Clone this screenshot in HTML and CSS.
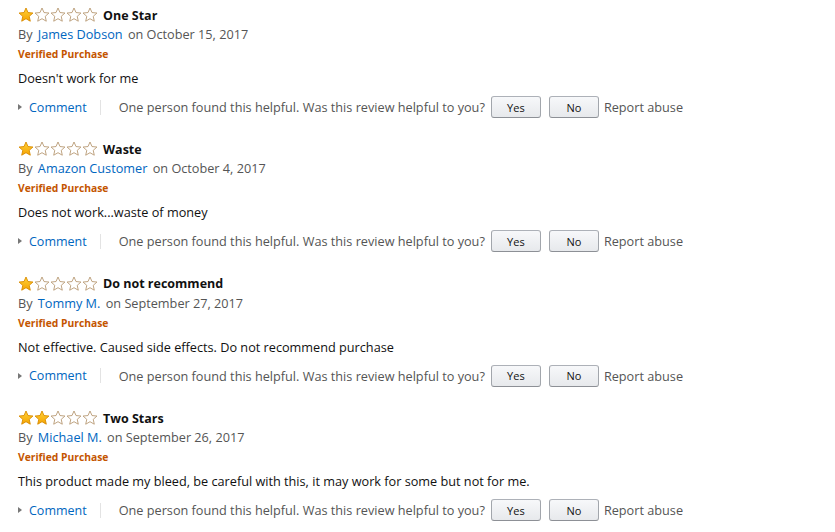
FILE: index.html
```html
<!DOCTYPE html>
<html>
<head>
<meta charset="utf-8">
<link rel="stylesheet" href="styles.css">
</head>
<body>
<svg width="0" height="0" class="defs" aria-hidden="true">
  <defs>
    <linearGradient id="gold" x1="0" y1="0" x2="0" y2="1">
      <stop offset="0" stop-color="#ffd23a"/>
      <stop offset="1" stop-color="#f5a300"/>
    </linearGradient>
    <symbol id="star-full" viewBox="0 0 16 16">
      <path d="M8 1 L10 5.55 L14.94 6.04 L11.23 9.35 L12.29 14.21 L8 11.7 L3.71 14.21 L4.77 9.35 L1.06 6.04 L6 5.55 Z" fill="url(#gold)" stroke="#d88b00" stroke-width="0.9" stroke-linejoin="round"/>
    </symbol>
    <symbol id="star-empty" viewBox="0 0 16 16">
      <path d="M8 1 L10 5.55 L14.94 6.04 L11.23 9.35 L12.29 14.21 L8 11.7 L3.71 14.21 L4.77 9.35 L1.06 6.04 L6 5.55 Z" fill="#fff" stroke="#b89a74" stroke-width="0.9" stroke-linejoin="round"/>
    </symbol>
  </defs>
</svg>

<div class="reviews">
  <div class="review">
    <div class="title-row">
      <span class="stars">
        <svg class="star"><use href="#star-full"/></svg><svg class="star"><use href="#star-empty"/></svg><svg class="star"><use href="#star-empty"/></svg><svg class="star"><use href="#star-empty"/></svg><svg class="star"><use href="#star-empty"/></svg>
      </span>
      <span class="title">One Star</span>
    </div>
    <div class="by-row">By <a class="link author">James Dobson</a> on October 15, 2017</div>
    <div class="verified">Verified Purchase</div>
    <div class="body">Doesn't work for me</div>
    <div class="actions">
      <span class="comment"><span class="tri"></span><a class="link">Comment</a></span>
      <span class="sep"></span>
      <span class="helpful">One person found this helpful. Was this review helpful to you?</span>
      <button class="btn">Yes</button>
      <button class="btn">No</button>
      <span class="report">Report abuse</span>
    </div>
  </div>

  <div class="review">
    <div class="title-row">
      <span class="stars">
        <svg class="star"><use href="#star-full"/></svg><svg class="star"><use href="#star-empty"/></svg><svg class="star"><use href="#star-empty"/></svg><svg class="star"><use href="#star-empty"/></svg><svg class="star"><use href="#star-empty"/></svg>
      </span>
      <span class="title">Waste</span>
    </div>
    <div class="by-row">By <a class="link author">Amazon Customer</a> on October 4, 2017</div>
    <div class="verified">Verified Purchase</div>
    <div class="body">Does not work...waste of money</div>
    <div class="actions">
      <span class="comment"><span class="tri"></span><a class="link">Comment</a></span>
      <span class="sep"></span>
      <span class="helpful">One person found this helpful. Was this review helpful to you?</span>
      <button class="btn">Yes</button>
      <button class="btn">No</button>
      <span class="report">Report abuse</span>
    </div>
  </div>

  <div class="review">
    <div class="title-row">
      <span class="stars">
        <svg class="star"><use href="#star-full"/></svg><svg class="star"><use href="#star-empty"/></svg><svg class="star"><use href="#star-empty"/></svg><svg class="star"><use href="#star-empty"/></svg><svg class="star"><use href="#star-empty"/></svg>
      </span>
      <span class="title">Do not recommend</span>
    </div>
    <div class="by-row">By <a class="link author">Tommy M.</a> on September 27, 2017</div>
    <div class="verified">Verified Purchase</div>
    <div class="body">Not effective. Caused side effects. Do not recommend purchase</div>
    <div class="actions">
      <span class="comment"><span class="tri"></span><a class="link">Comment</a></span>
      <span class="sep"></span>
      <span class="helpful">One person found this helpful. Was this review helpful to you?</span>
      <button class="btn">Yes</button>
      <button class="btn">No</button>
      <span class="report">Report abuse</span>
    </div>
  </div>

  <div class="review">
    <div class="title-row">
      <span class="stars">
        <svg class="star"><use href="#star-full"/></svg><svg class="star"><use href="#star-full"/></svg><svg class="star"><use href="#star-empty"/></svg><svg class="star"><use href="#star-empty"/></svg><svg class="star"><use href="#star-empty"/></svg>
      </span>
      <span class="title">Two Stars</span>
    </div>
    <div class="by-row">By <a class="link author">Michael M.</a> on September 26, 2017</div>
    <div class="verified">Verified Purchase</div>
    <div class="body">This product made my bleed, be careful with this, it may work for some but not for me.</div>
    <div class="actions">
      <span class="comment"><span class="tri"></span><a class="link">Comment</a></span>
      <span class="sep"></span>
      <span class="helpful">One person found this helpful. Was this review helpful to you?</span>
      <button class="btn">Yes</button>
      <button class="btn">No</button>
      <span class="report">Report abuse</span>
    </div>
  </div>
</div>
</body>
</html>
```

FILE: styles.css
```css
html, body {
  margin: 0;
  padding: 0;
  background: #fff;
}
body {
  font-family: "Open Sans", "Liberation Sans", sans-serif;
  font-size: 12.7px;
  color: #111;
}
.defs {
  position: absolute;
  width: 0;
  height: 0;
}
.reviews {
  padding: 5px 0 0 18px;
}
.review {
  margin-bottom: 20.35px;
}
.title-row {
  display: flex;
  align-items: center;
  height: 20px;
}
.stars {
  display: flex;
  width: 80px;
  margin-right: 5px;
}
.star {
  width: 16px;
  height: 16px;
  display: block;
}
.title {
  font-weight: bold;
  font-size: 12.5px;
  color: #111;
}
.by-row {
  height: 19px;
  line-height: 19px;
  color: #555;
}
.link {
  color: #0066c0;
  text-decoration: none;
}
.author {
  margin: 0 2px;
}
.verified {
  margin-top: 1px;
  height: 19px;
  line-height: 19px;
  font-size: 10.3px;
  font-weight: bold;
  color: #c45500;
}
.body {
  margin-top: 4px;
  height: 20px;
  line-height: 20px;
  color: #111;
}
.actions {
  margin-top: 7px;
  height: 24px;
  display: flex;
  align-items: center;
  color: #555;
}
.comment {
  display: flex;
  align-items: center;
  font-size: 12.5px;
}
.tri {
  width: 0;
  height: 0;
  border-top: 3.5px solid transparent;
  border-bottom: 3.5px solid transparent;
  border-left: 4px solid #777;
  margin-right: 7px;
}
.sep {
  width: 1px;
  height: 15px;
  background: #e3e3e3;
  margin: 0 18px 0 13px;
}
.helpful {
  margin-right: 6px;
}
.btn {
  width: 50px;
  height: 22px;
  padding: 0;
  margin: 0 8px 0 0;
  border: 1px solid #adb1b8;
  border-color: #adb1b8 #a2a6ac #8d9096;
  border-radius: 3px;
  background: linear-gradient(to bottom, #f7f8fa, #e7e9ec);
  font-family: inherit;
  font-size: 11px;
  color: #111;
}
.btn + .btn {
  margin-right: 5px;
}
.report {
  color: #555;
}
```
